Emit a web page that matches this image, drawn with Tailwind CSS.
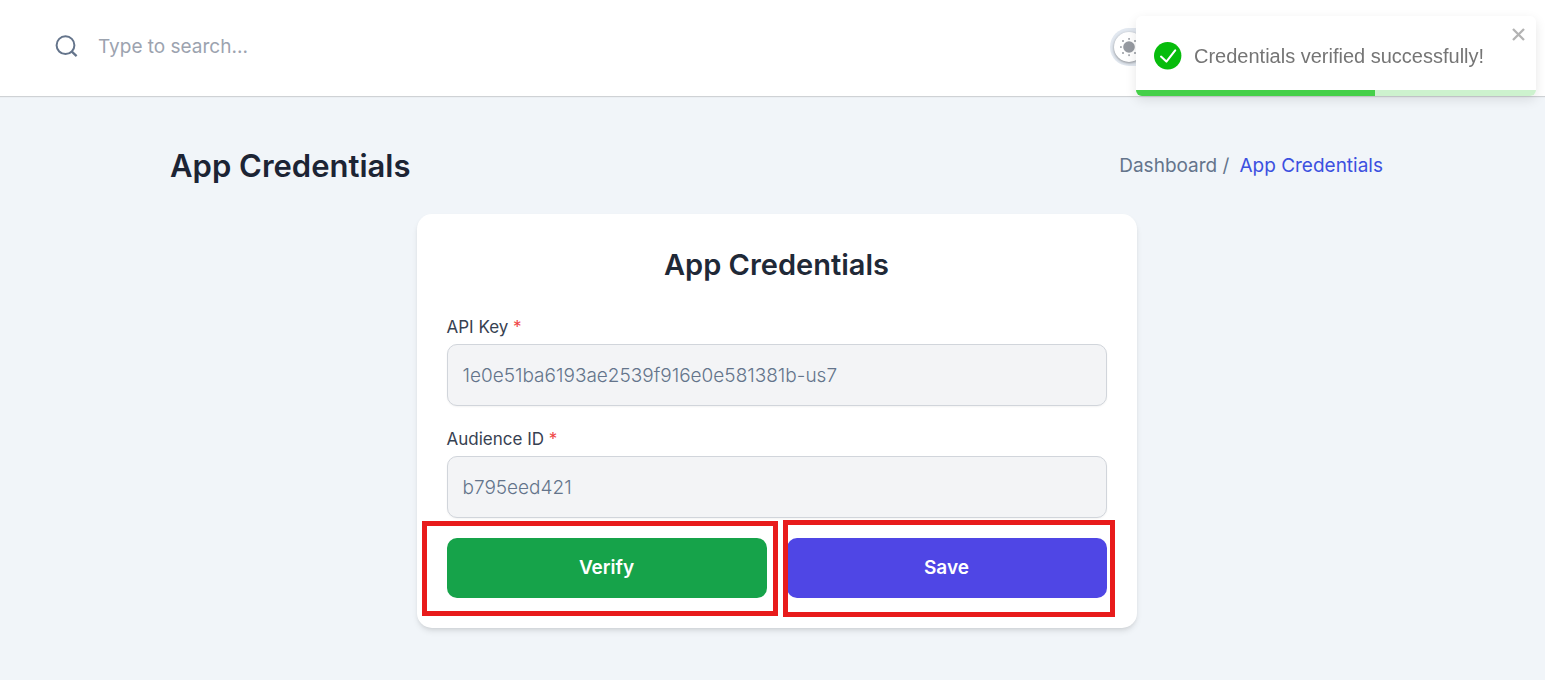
<!DOCTYPE html>
<html lang="en">
<head>
<meta charset="utf-8">
<meta name="viewport" content="width=device-width, initial-scale=1">
<title>App Credentials</title>
<script src="https://cdn.jsdelivr.net/npm/@tailwindcss/browser@4"></script>
</head>
<body class="min-h-screen bg-[#f1f5f9] font-['Inter',sans-serif] text-[#64748b]">
<header class="flex h-24 items-center justify-between bg-white pb-[3px] pl-[55px] pr-[365px] shadow-[0_1px_1px_rgba(0,0,0,0.14)]">
  <form class="flex flex-1 items-center gap-5">
    <button type="button" aria-label="Search">
      <svg class="block size-[23px]" viewBox="0 0 23 23" fill="none" stroke="#64748b" stroke-width="2"><circle cx="10.5" cy="10.2" r="8.9"/><path d="M16.8 16.6l4.8 4.6" stroke-width="2.3"/></svg>
    </button>
    <input type="search" aria-label="Search" placeholder="Type to search..." class="w-full max-w-[480px] bg-transparent text-[19px] leading-6 outline-none placeholder:text-[#9ca3af]">
  </form>
  <label class="flex h-[38px] w-[70px] items-center rounded-full bg-[#e2e8f0] px-1">
    <input type="checkbox" aria-label="Dark mode" class="sr-only">
    <span class="flex size-[30px] items-center justify-center rounded-full bg-white shadow-[0_1px_3px_rgba(0,0,0,0.4)]">
      <svg class="size-5" viewBox="0 0 20 20" fill="#969aa1"><circle cx="10" cy="10" r="5.8"/><g><rect x="9.3" y="1" width="1.5" height="1.8"/><rect x="9.3" y="17.3" width="1.5" height="1.8"/><rect x="1" y="9.3" width="1.8" height="1.5"/><rect x="17.3" y="9.3" width="1.8" height="1.5"/><circle cx="4" cy="4" r="1"/><circle cx="16" cy="4" r="1"/><circle cx="4" cy="16" r="1"/><circle cx="16" cy="16" r="1"/></g></svg>
    </span>
  </label>
</header>

<main class="pl-2">
  <div class="mx-auto max-w-[1213px] pt-12">
    <div class="mb-[26px] flex items-center justify-between">
      <h1 class="text-[31px] font-semibold leading-[44px] text-[#1c2434]">App Credentials</h1>
      <nav aria-label="Breadcrumb">
        <ol class="flex gap-2.5 text-[19px] leading-7">
          <li><a href="#">Dashboard /</a></li>
          <li><a href="#" class="text-[#3c50e0]">App Credentials</a></li>
        </ol>
      </nav>
    </div>

    <section class="mx-auto max-w-[720px] rounded-[15px] bg-white p-[30px] shadow-[0_4px_6px_-1px_rgba(0,0,0,0.1),0_2px_4px_-2px_rgba(0,0,0,0.1)]">
      <h2 class="mb-7 text-center text-[29px] font-semibold leading-[42px] text-[#1f2937]">App Credentials</h2>
      <form>
        <div class="mb-5">
          <label for="api-key" class="mb-[3px] block text-[17px] leading-[27px] text-[#374151]">API Key <span class="text-[#ef4444]">*</span></label>
          <input id="api-key" type="text" disabled value="1e0e51ba6193ae2539f916e0e581381b-us7" class="block h-[62px] w-full rounded-[10px] border border-[#d1d5db] bg-[#f3f4f6] px-[15px] text-[19px] font-light text-[#64748b] shadow-[0_1px_2px_rgba(0,0,0,0.05)]">
        </div>
        <div class="mb-5">
          <label for="audience-id" class="mb-[3px] block text-[17px] leading-[27px] text-[#374151]">Audience ID <span class="text-[#ef4444]">*</span></label>
          <input id="audience-id" type="text" disabled value="b795eed421" class="block h-[62px] w-full rounded-[10px] border border-[#d1d5db] bg-[#f3f4f6] px-[15px] text-[19px] font-light text-[#64748b] shadow-[0_1px_2px_rgba(0,0,0,0.05)]">
        </div>
        <div class="grid grid-cols-2 gap-5">
          <div class="relative">
            <button type="button" class="block h-[60px] w-full rounded-[10px] bg-[#16a34a] text-[19px] font-semibold text-white">Verify</button>
            <span class="pointer-events-none absolute -bottom-[18px] -left-[25px] -right-[11px] -top-[17px] border-5 border-[#e81b1b]"></span>
          </div>
          <div class="relative">
            <button type="button" class="block h-[60px] w-full rounded-[10px] bg-[#4f46e5] text-[19px] font-semibold text-white">Save</button>
            <span class="pointer-events-none absolute -bottom-[19px] -left-1 -right-2 -top-[18px] border-5 border-[#e81b1b]"></span>
          </div>
        </div>
      </form>
    </section>
  </div>
</main>

<div role="alert" class="fixed right-[9px] top-4 h-20 w-[400px] overflow-hidden rounded-md bg-white font-['Liberation_Sans',sans-serif] text-[#757575] shadow-[0_4px_12px_rgba(0,0,0,0.1)]">
  <div class="flex h-20 items-center gap-3 pl-[18px]">
    <svg class="size-7 shrink-0" viewBox="0 0 28 28"><circle cx="13.7" cy="13.7" r="13.7" fill="#07bc0c"/><path d="M7 14.6l5.4 5 8.8-11.2" fill="none" stroke="#fff" stroke-width="2.1" stroke-linecap="round" stroke-linejoin="round"/></svg>
    <p class="text-[20px] leading-8">Credentials verified successfully!</p>
  </div>
  <button type="button" aria-label="Close" class="absolute right-[11px] top-3">
    <svg class="block size-[13px]" viewBox="0 0 13 13" fill="none" stroke="#b3b3b3" stroke-width="2.3"><path d="M1 1l11 11M12 1L1 12"/></svg>
  </button>
  <div class="absolute inset-x-0 bottom-0 h-1.5 bg-[#cdf2ce]"><div class="h-full bg-[#45d049]" style="width:59.7%"></div></div>
</div>
</body>
</html>
